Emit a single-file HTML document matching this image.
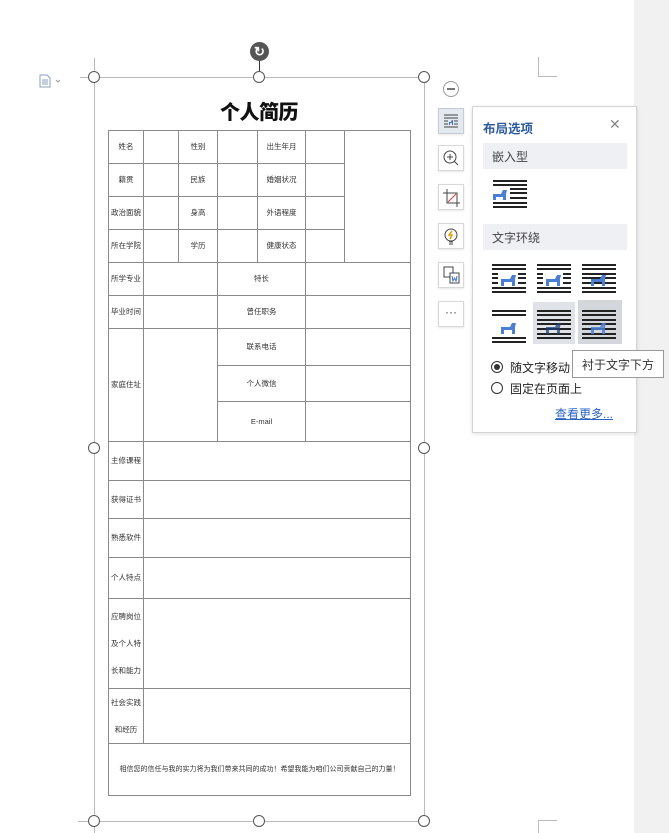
<!DOCTYPE html><html><head><meta charset="utf-8"><style>
*{margin:0;padding:0;box-sizing:border-box}
body{width:669px;height:833px;background:#fff;position:relative;overflow:hidden;font-family:"Liberation Sans","Noto Sans CJK SC",sans-serif}
.a{position:absolute}
.h{position:absolute;width:12px;height:12px;border:1px solid #555;border-radius:50%;background:#fff}
table{position:absolute;left:108px;top:130px;border-collapse:collapse;table-layout:fixed;width:302px}
td{border:1px solid #8a8a8a;font-size:7.5px;color:#333;text-align:center;padding:0;line-height:1}
.btn{position:absolute;left:438px;width:26px;height:26px;border:1px solid #d8d8d8;background:#fff;box-shadow:0 1px 2px rgba(0,0,0,.1)}
.sec{position:absolute;left:483px;width:144px;height:26px;background:#eef0f3;font-size:12px;color:#444;padding:5px 0 0 9px}
</style></head><body>
<div class="a" style="left:634px;top:0;width:35px;height:833px;background:#f1f1f1"></div>
<div class="a" style="left:94px;top:58px;width:1px;height:19px;background:#bbb"></div>
<div class="a" style="left:538px;top:57px;width:1px;height:19px;background:#bbb"></div>
<div class="a" style="left:538px;top:76px;width:19px;height:1px;background:#bbb"></div>
<div class="a" style="left:538px;top:820px;width:19px;height:1px;background:#bbb"></div>
<div class="a" style="left:538px;top:820px;width:1px;height:13px;background:#bbb"></div>
<div class="a" style="left:80px;top:77px;width:345px;height:1px;background:#bbb"></div>
<div class="a" style="left:78px;top:821px;width:347px;height:1px;background:#bbb"></div>
<div class="a" style="left:94px;top:77px;width:1px;height:756px;background:#bbb"></div>
<div class="a" style="left:424px;top:77px;width:1px;height:745px;background:#bbb"></div>
<div class="a" style="left:259px;top:58px;width:1px;height:14px;background:#333"></div>
<div class="a" style="left:250px;top:42px;width:19px;height:19px;border-radius:50%;background:#555;color:#fff;font-size:13px;text-align:center;line-height:19px;font-weight:bold">↻</div>
<div class="h" style="left:88px;top:71px"></div><div class="h" style="left:253px;top:71px"></div><div class="h" style="left:418px;top:71px"></div>
<div class="h" style="left:88px;top:442px"></div><div class="h" style="left:418px;top:442px"></div>
<div class="h" style="left:88px;top:815px"></div><div class="h" style="left:253px;top:815px"></div><div class="h" style="left:418px;top:815px"></div>
<svg class="a" style="left:39px;top:74px" width="24" height="14"><path d="M1 1h7l3 3v9H1z" fill="none" stroke="#8aa0c0"/><path d="M3 6h6M3 8h6M3 10h6" stroke="#8aa0c0"/><path d="M17 6l2 2 2-2" fill="none" stroke="#999"/></svg>
<div class="a" style="left:108px;top:96px;width:302px;text-align:center;font-size:20px;font-weight:900;color:#111;letter-spacing:-0.5px">个人简历</div>
<table>
<colgroup><col style="width:35px"><col style="width:35px"><col style="width:39px"><col style="width:40px"><col style="width:48px"><col style="width:39px"><col style="width:66px"></colgroup>
<tr style="height:33px"><td>姓名</td><td></td><td>性别</td><td></td><td>出生年月</td><td></td><td rowspan="4"></td></tr>
<tr style="height:33px"><td>籍贯</td><td></td><td>民族</td><td></td><td>婚姻状况</td><td></td></tr>
<tr style="height:33px"><td>政治面貌</td><td></td><td>身高</td><td></td><td>外语程度</td><td></td></tr>
<tr style="height:33px"><td>所在学院</td><td></td><td>学历</td><td></td><td>健康状态</td><td></td></tr>
<tr style="height:33px"><td>所学专业</td><td colspan="2"></td><td colspan="2">特长</td><td colspan="2"></td></tr>
<tr style="height:33px"><td>毕业时间</td><td colspan="2"></td><td colspan="2">曾任职务</td><td colspan="2"></td></tr>
<tr style="height:37px"><td rowspan="3">家庭住址</td><td colspan="2" rowspan="3"></td><td colspan="2">联系电话</td><td colspan="2"></td></tr>
<tr style="height:36px"><td colspan="2">个人微信</td><td colspan="2"></td></tr>
<tr style="height:40px"><td colspan="2">E-mail</td><td colspan="2"></td></tr>
<tr style="height:39px"><td>主修课程</td><td colspan="6"></td></tr>
<tr style="height:38px"><td>获得证书</td><td colspan="6"></td></tr>
<tr style="height:39px"><td>熟悉软件</td><td colspan="6"></td></tr>
<tr style="height:41px"><td>个人特点</td><td colspan="6"></td></tr>
<tr style="height:90px"><td style="line-height:27px">应聘岗位<br>及个人特<br>长和能力</td><td colspan="6"></td></tr>
<tr style="height:55px"><td style="line-height:27px">社会实践<br>和经历</td><td colspan="6"></td></tr>
<tr style="height:52px"><td colspan="7" style="font-size:7px">相信您的信任与我的实力将为我们带来共同的成功！希望我能为咱们公司贡献自己的力量！</td></tr>
</table>
<div class="a" style="left:443px;top:81px;width:16px;height:16px;border:1px solid #999;border-radius:50%"></div>
<div class="a" style="left:447px;top:88px;width:8px;height:1.5px;background:#777"></div>
<div class="btn" style="top:108px;background:#e4e8ef;border-color:#c6ccd6"><svg width="24" height="24"><path d="M5 6h14M5 9h14M5 12h4M15 12h4M5 15h4M15 15h4M5 18h14" stroke="#444"/><path d="M10 16v-3h2l1-2h1v5h-1v-2h-2v2z" fill="#3c72c8"/></svg></div>
<div class="btn" style="top:145px"><svg width="24" height="24"><circle cx="11" cy="11" r="6" fill="none" stroke="#444"/><path d="M8 11h6M11 8v6M15 15l4 4" stroke="#444"/></svg></div>
<div class="btn" style="top:184px"><svg width="24" height="24"><path d="M8 4v14h13M4 8h14v14" fill="none" stroke="#444"/><path d="M9 17l8-8" stroke="#d33"/></svg></div>
<div class="btn" style="top:223px"><svg width="24" height="24"><circle cx="12" cy="11" r="6" fill="none" stroke="#444"/><path d="M10 18h4M10 20h4" stroke="#444"/><path d="M13 7l-3 4h3l-2 4" fill="none" stroke="#e0a000" stroke-width="1.5"/></svg></div>
<div class="btn" style="top:262px"><svg width="24" height="24"><rect x="5" y="4" width="9" height="10" fill="none" stroke="#444"/><rect x="11" y="10" width="9" height="10" fill="#fff" stroke="#444"/><path d="M13 13l1 5 1.5-3 1.5 3 1-5" fill="none" stroke="#3c72c8"/></svg></div>
<div class="btn" style="top:301px;font-size:12px;text-align:center;line-height:20px;color:#444">···</div>
<div class="a" style="left:472px;top:106px;width:165px;height:327px;background:#fff;border:1px solid #d4d4d4;box-shadow:0 1px 4px rgba(0,0,0,.12)"></div>
<div class="a" style="left:483px;top:118px;font-size:12.5px;font-weight:bold;color:#2c5a9e">布局选项</div>
<div class="a" style="left:609px;top:116px;font-size:14px;color:#888">✕</div>
<div class="sec" style="top:143px">嵌入型</div>
<div class="sec" style="top:224px">文字环绕</div>
<svg class="a" style="left:490px;top:178px" width="40" height="40">
<path d="M3 3h34M3 7h34M20 11h17M20 15h17M20 20h17M3 25h34M3 29h34" stroke="#222" stroke-width="2"/>
<path transform="translate(3,11)" d="M0 11V5h8l2-4h4l-1 4v6h-3V8H3v3z" fill="#4a7fd4"/></svg>
<svg class="a" style="left:490px;top:262px" width="135" height="82">
<g stroke="#222" stroke-width="2">
<path d="M2 3h34M2 7h34M2 12h6M28 12h8M2 16h6M28 16h8M2 21h6M28 21h8M2 26h34M2 30h34"/>
<path d="M47 3h34M47 7h34M47 12h6M73 12h8M47 16h6M73 16h8M47 21h6M73 21h8M47 26h34M47 30h34"/>
<path d="M92 3h34M92 7h34M92 12h34M92 16h34M92 21h34M92 26h34M92 30h34"/>
<path d="M2 49h34M2 53h34M2 76h34M2 80h34"/>
</g>
<rect x="43" y="40" width="42" height="42" fill="#dfe2e6"/><rect x="88" y="38" width="44" height="44" fill="#d3d7dc"/>
<g stroke="#222" stroke-width="2"><path d="M47 49h34M47 53h34M47 58h34M47 62h34M47 67h34M47 72h34M47 76h34"/><path d="M92 49h34M92 53h34M92 58h34M92 62h34M92 67h34M92 72h34M92 76h34"/></g>
<g fill="#4a7fd4">
<path transform="translate(11,12)" d="M0 12V5h9l2-4h4l-1 4v7h-3V8H3v4z"/>
<path transform="translate(56,12)" d="M0 12V5h9l2-4h4l-1 4v7h-3V8H3v4z"/>
<path transform="translate(101,12)" d="M0 12V5h9l2-4h4l-1 4v7h-3V8H3v4z"/>
<path transform="translate(11,60)" d="M0 12V5h9l2-4h4l-1 4v7h-3V8H3v4z"/>
<path transform="translate(101,60)" d="M0 12V5h9l2-4h4l-1 4v7h-3V8H3v4z" opacity=".85"/></g>
<path transform="translate(56,60)" d="M0 12V5h9l2-4h4l-1 4v7h-3V8H3v4z" fill="#1e3f78" opacity=".75"/>
</svg>
<div class="a" style="left:491px;top:361px;width:12px;height:12px;border:1px solid #333;border-radius:50%"></div>
<div class="a" style="left:494px;top:364px;width:6px;height:6px;background:#333;border-radius:50%"></div>
<div class="a" style="left:510px;top:359px;font-size:12px;color:#222">随文字移动</div>
<div class="a" style="left:491px;top:382px;width:12px;height:12px;border:1px solid #333;border-radius:50%"></div>
<div class="a" style="left:510px;top:380px;font-size:12px;color:#222">固定在页面上</div>
<div class="a" style="left:555px;top:405px;font-size:12px;color:#2a63c4;text-decoration:underline">查看更多...</div>
<div class="a" style="left:572px;top:350px;width:92px;height:28px;background:#fff;border:1px solid #999;font-size:12px;color:#333;padding:5px 0 0 9px">衬于文字下方</div>
</body></html>
